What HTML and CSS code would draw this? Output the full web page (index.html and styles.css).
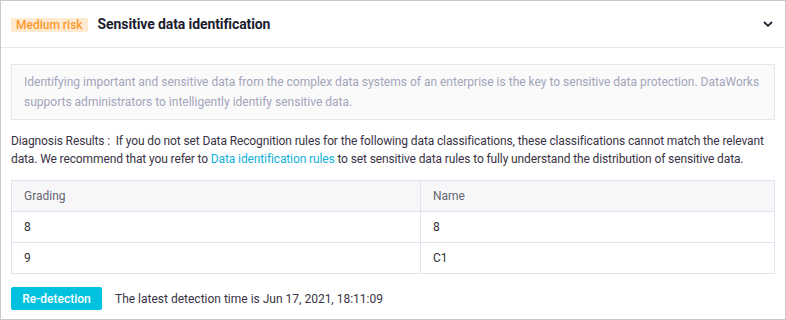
FILE: index.html
```html
<!DOCTYPE html>
<html lang="en">

<head>
    <meta charset="UTF-8">
    <meta name="viewport" content="width=device-width, initial-scale=1.0">
    <title>Sensitive data identification</title>
    <link rel="stylesheet" href="styles.css">
</head>

<body>
    <div class="card">
        <div class="card-head">
            <span class="tag">Medium risk</span>
            <span class="title">Sensitive data identification</span>
            <svg class="arrow" width="10" height="6" viewBox="0 0 10 6">
                <path d="M1 1 L5 4.8 L9 1" fill="none" stroke="#1f2035" stroke-width="1.8" />
            </svg>
        </div>
        <div class="card-body">
            <div class="intro">
                Identifying important and sensitive data from the complex data systems of an enterprise is the key to sensitive data protection. DataWorks supports administrators to intelligently identify sensitive data.
            </div>
            <p class="result">
                Diagnosis Results :&nbsp; If you do not set Data Recognition rules for the following data classifications, these classifications cannot match the relevant data. We recommend that you refer to <a href="#">Data identification rules</a> to set sensitive data rules to fully understand the distribution of sensitive data.
            </p>
            <table>
                <tr>
                    <th>Grading</th>
                    <th>Name</th>
                </tr>
                <tr>
                    <td>8</td>
                    <td>8</td>
                </tr>
                <tr>
                    <td>9</td>
                    <td>C1</td>
                </tr>
            </table>
            <div class="foot">
                <button class="btn">Re-detection</button>
                <span class="time">The latest detection time is Jun 17, 2021, 18:11:09</span>
            </div>
        </div>
    </div>
</body>

</html>
```

FILE: styles.css
```css
* {
    box-sizing: border-box;
}

body {
    margin: 0;
    font-family: Roboto, "Liberation Sans", sans-serif;
    font-size: 12px;
    color: #333;
    background: #fff;
}

.card {
    width: 786px;
    height: 320px;
    border: 1px solid #c9c9c9;
}

.card-head {
    height: 47px;
    display: flex;
    align-items: center;
    padding: 0 12px 0 10px;
    border-bottom: 1px solid #e8e8f0;
}

.tag {
    height: 14px;
    line-height: 14px;
    padding: 0 5px;
    background: #fee9d1;
    color: #ff9a2b;
    font-size: 12px;
    font-weight: 500;
    border-radius: 1px;
    margin-top: 1px;
}

.title {
    margin-left: 10px;
    font-size: 14px;
    font-weight: bold;
    color: #1b1c2e;
    letter-spacing: -0.1px;
}

.arrow {
    margin-left: auto;
}

.card-body {
    padding: 16px 10px 0 10px;
}

.intro {
    background: #fafafa;
    border: 1px solid #e8e8e8;
    padding: 8px 12px 7px;
    line-height: 19.5px;
    color: #a3a5bb;
}

.result {
    margin: 12px 0 12px;
    line-height: 18px;
    color: #3a3345;
    letter-spacing: -0.12px;
}

.result a {
    color: #11b2da;
    text-decoration: none;
}

table {
    width: 764px;
    border-collapse: collapse;
}

th,
td {
    height: 31px;
    padding: 0 12px;
    text-align: left;
    border: 1px solid #e3e3f0;
    font-weight: normal;
}

th {
    background: #f7f7f9;
    color: #666670;
}

th:first-child,
td:first-child {
    width: 409px;
}

.foot {
    display: flex;
    align-items: center;
    margin-top: 13px;
}

.btn {
    width: 91px;
    height: 23px;
    border: none;
    border-radius: 2px;
    background: #00c1de;
    color: #fff;
    font-family: Roboto, "Liberation Sans", sans-serif;
    font-size: 12px;
    font-weight: 500;
}

.time {
    margin-left: 13px;
    color: #3a3345;
}
```
